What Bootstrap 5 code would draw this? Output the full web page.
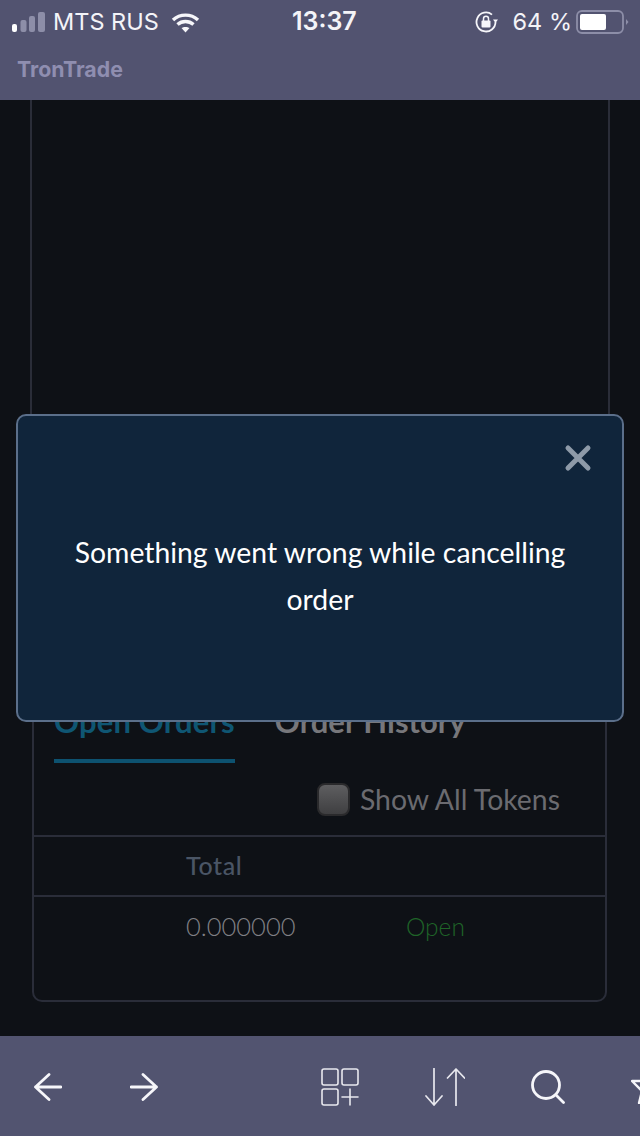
<!DOCTYPE html>
<html lang="en">
<head>
  <meta charset="UTF-8">
  <title>TronTrade</title>
  <meta name="viewport" content="width=device-width, initial-scale=1">
  <link href="https://cdn.jsdelivr.net/npm/bootstrap@5.3.3/dist/css/bootstrap.min.css" rel="stylesheet">
  <style>
    html, body { height: 100%; }
    body { background: #0e1116; font-family: Lato, "Liberation Sans", sans-serif; overflow: hidden; }
    .app-shell { height: 1136px; }

    /* browser chrome */
    .status-row { height: 44px; background: #525370; color: #f4f4f8; font-family: Inter, "Liberation Sans", sans-serif; font-size: 23.5px; padding: 0 11px 0 12px; }
    .status-left { width: 280px; gap: 8px; }
    .status-time { font-weight: 600; font-size: 25px; width: 65px; }
    .status-right { margin-left: auto; gap: 4px; }
    .status-lock { margin-right: 11px; }
    .site-bar { height: 56px; background: #525370; padding: 0 0 5px 17px; }
    .site-name { color: #8f8eb0; font-family: Inter, "Liberation Sans", sans-serif; font-weight: 700; font-size: 21.300px; }
    .tool-bar { height: 100px; background: #525470; padding: 2px 0 0 34px; gap: 66px; overflow: hidden; flex-shrink: 0; }
    .tool-bar svg { flex-shrink: 0; }
    .tool-next { margin-left: 2px; }
    .tool-gap { margin-left: 97px; }

    /* page */
    .page-main { padding: 0 30px; }
    .chart-panel { height: 580px; margin-bottom: 10px; border: 2px solid #2a2d38; border-top: 0; }
    .orders-panel { height: 312px; margin: 0 3px 0 2px; background: #0e1116; border: 2px solid #2a2d39; border-radius: 10px; }
    .tab-row { padding: 9px 0 0 20px; gap: 40px; }
    .tab-item { font-size: 31px; line-height: 40px; font-weight: 700; color: #77777b; padding-bottom: 18px; border-bottom: 4px solid transparent; }
    .tab-item.tab-on { letter-spacing: .15px; color: #0f5673; border-bottom-color: #0d5270; }
    .token-row { height: 72px; padding-right: 45px; gap: 10px; color: #6b6b70; font-size: 28.400px; }
    .token-box { width: 33px; height: 33px; border: 2px solid #2a2a2c; border-radius: 8px; background: linear-gradient(#5e5e60, #3f3f41); }
    .order-head { height: 62px; border-top: 2px solid #2a2d39; border-bottom: 2px solid #2a2d39; font-size: 25px; font-weight: 500; letter-spacing: .6px; color: #4a5565; }
    .order-line { padding-top: 10px; font-size: 25.500px; font-weight: 300; color: #808085; }
    .cell-total { margin-left: 152px; width: 220px; }
    .cell-open { color: #1f6428; font-size: 24.500px; }

    /* dialog */
    .dialog-box { width: 608px; height: 308px; background: #10253b; border: 2px solid #5b6f8a; border-radius: 10px; color: #fff; }
    .dialog-close { background: none; border: 0; padding: 0; margin: 28px 30px 0 0; line-height: 0; }
    .dialog-text { font-size: 28.350px; line-height: 47px; padding: 57px 40px 0; }
  </style>
</head>
<body>

  <div class="app-shell d-flex flex-column">
    <!-- Status bar -->
    <div class="status-row d-flex align-items-center flex-shrink-0">
      <div class="status-left d-flex align-items-center">
        <svg width="33" height="20" viewBox="0 0 33 20">
          <rect x="0" y="12" width="5" height="8" rx="2" fill="#fff"/>
          <rect x="8.500" y="8" width="6" height="12" rx="2" fill="#8d8ea8"/>
          <rect x="17" y="4" width="6" height="16" rx="2" fill="#8d8ea8"/>
          <rect x="26" y="0" width="7" height="20" rx="2" fill="#8d8ea8"/>
        </svg>
        <span>MTS RUS</span>
        <svg class="ms-1" width="29" height="21" viewBox="0 0 29 21" fill="none" stroke="#f6f6fa" stroke-width="3.400">
          <path d="M2 8 C9 1.500 20 1.500 27 8"/>
          <path d="M6.500 12.500 C11 8.500 18 8.500 22.500 12.500"/>
          <path d="M14.500 20.500 L10.500 16 C12.500 14.500 16.500 14.500 18.500 16 Z" fill="#f6f6fa" stroke="none"/>
        </svg>
      </div>
      <div class="status-time">13:37</div>
      <div class="status-right d-flex align-items-center">
        <svg class="status-lock" width="23" height="22" viewBox="0 0 23 22" fill="none" stroke="#f6f6fa" stroke-width="1.800">
          <path d="M20.500 11 A9.500 9.500 0 1 1 17 3.600"/>
          <path d="M18 8.500 H23 L20.500 12 Z" fill="#f6f6fa" stroke="none"/>
          <rect x="6.500" y="9.500" width="9" height="7" rx="1" fill="#f6f6fa" stroke="none"/>
          <path d="M8.500 10 V7.800 A2.500 2.500 0 0 1 13.500 7.800 V10" stroke-width="1.500"/>
        </svg>
        <span>64 %</span>
        <svg width="53" height="24" viewBox="0 0 53 24">
          <rect x="1" y="1" width="46" height="22" rx="5" fill="none" stroke="#8d8ea8" stroke-width="1.800"/>
          <rect x="4" y="4" width="26" height="16" rx="2" fill="#fff"/>
          <path d="M50 9 L52.500 12 L50 15 Z" fill="#8d8ea8"/>
        </svg>
      </div>
    </div>
    <div class="site-bar d-flex align-items-center flex-shrink-0">
      <span class="site-name">TronTrade</span>
    </div>

    <!-- Page -->
    <div class="page-main flex-grow-1">
      <div class="chart-panel"></div>
      <div class="orders-panel">
        <div class="tab-row d-flex">
          <div class="tab-item tab-on">Open Orders</div>
          <div class="tab-item">Order History</div>
        </div>
        <div class="token-row d-flex align-items-center justify-content-end">
          <span class="token-box"></span>
          <span>Show All Tokens</span>
        </div>
        <div class="order-head d-flex align-items-center">
          <span class="cell-total">Total</span>
        </div>
        <div class="order-line d-flex align-items-baseline">
          <span class="cell-total">0.000000</span>
          <span class="cell-open">Open</span>
        </div>
      </div>
    </div>

    <!-- Browser toolbar -->
    <div class="tool-bar d-flex align-items-center">
      <svg width="28" height="28" viewBox="0 0 28 28" fill="none" stroke="#f6f6fa" stroke-width="2.800" stroke-linecap="round" stroke-linejoin="round">
        <path d="M27 14 H1.500 M15 1.500 L1.500 14 L15 26.500"/>
      </svg>
      <svg class="tool-next" width="28" height="28" viewBox="0 0 28 28" fill="none" stroke="#f6f6fa" stroke-width="2.800" stroke-linecap="round" stroke-linejoin="round">
        <path d="M1 14 H26.500 M13 1.500 L26.500 14 L13 26.500"/>
      </svg>
      <svg class="tool-gap" width="38" height="38" viewBox="0 0 38 38" fill="none" stroke="#e8e8ee" stroke-width="1.600" stroke-linecap="round">
        <rect x="1" y="1" width="16" height="16" rx="2"/>
        <rect x="21" y="1" width="16" height="16" rx="2"/>
        <rect x="1" y="21" width="16" height="16" rx="2"/>
        <path d="M21 29 H37 M29 21 V37"/>
      </svg>
      <svg width="40" height="38" viewBox="0 0 40 38" fill="none" stroke="#e8e8ee" stroke-width="1.700" stroke-linecap="round" stroke-linejoin="round">
        <path d="M9 0.500 V37 M1 28 L9 37 L17 28"/>
        <path d="M31 37.500 V1 M22.500 10 L31 1 L39.500 10"/>
      </svg>
      <svg width="34" height="34" viewBox="0 0 34 34" fill="none" stroke="#f6f6fa" stroke-width="2.800" stroke-linecap="round">
        <circle cx="15" cy="15" r="13.500"/>
        <path d="M25 25 L32.500 32.500"/>
      </svg>
      <svg width="34" height="34" viewBox="0 0 34 34" fill="none" stroke="#f6f6fa" stroke-width="2.400" stroke-linejoin="round">
        <path d="M1 11 L12 11 L17 0 L22 11 L33 11 L23 21 L26 33 L17 26 L8 33 L11 21 Z"/>
      </svg>
    </div>
  </div>

  <!-- Error dialog -->
  <div class="position-fixed top-0 start-0 w-100 h-100 d-flex align-items-center justify-content-center">
    <div class="dialog-box">
      <div class="d-flex justify-content-end">
        <button type="button" class="dialog-close" aria-label="Close">
          <svg width="28" height="28" viewBox="0 0 28 28" stroke="#8e9aa8" stroke-width="5" stroke-linecap="round">
            <path d="M4 4 L24 24 M24 4 L4 24"/>
          </svg>
        </button>
      </div>
      <p class="dialog-text text-center mb-0">Something went wrong while cancelling order</p>
    </div>
  </div>

  <script src="https://cdn.jsdelivr.net/npm/bootstrap@5.3.3/dist/js/bootstrap.bundle.min.js"></script>
</body>
</html>
